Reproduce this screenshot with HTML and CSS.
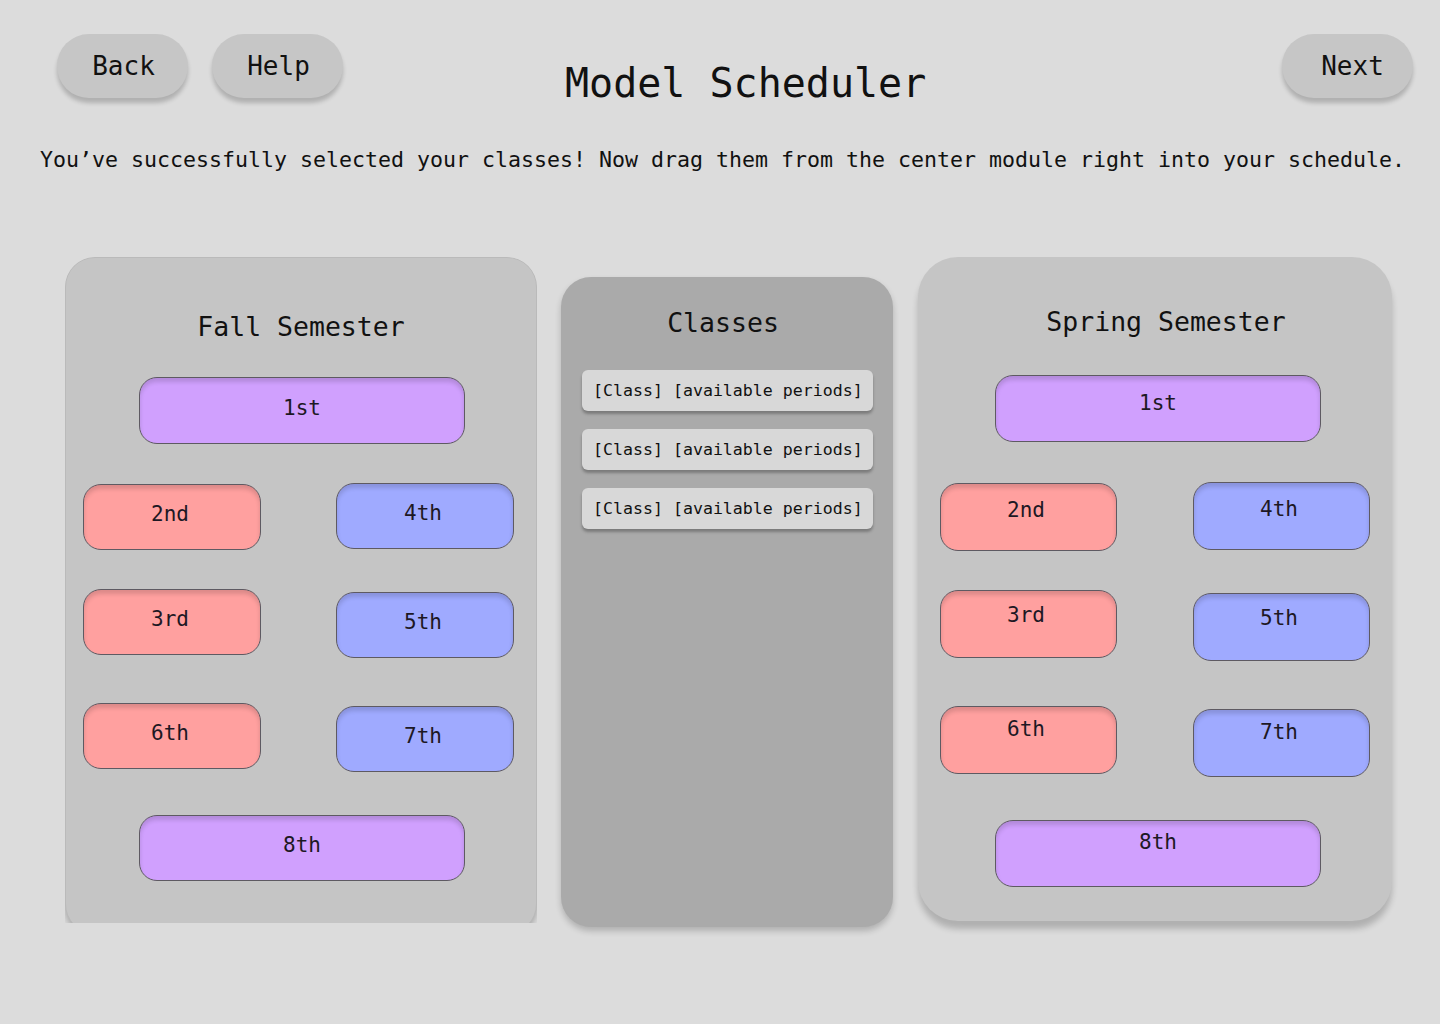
FILE: index.html
```html
<!DOCTYPE html>
<html lang="en">
<head>
<meta charset="utf-8">
<title>Model Scheduler</title>
<link rel="stylesheet" href="styles.css">
</head>
<body>
<header class="top">
  <div class="nav-left">
    <button class="pill">Back</button>
    <button class="pill">Help</button>
  </div>
  <h1 class="title">Model Scheduler</h1>
  <button class="pill next">Next</button>
</header>
<p class="intro">You’ve successfully selected your classes! Now drag them from the center module right into your schedule.</p>

<main class="board">
  <div class="fall-clip">
    <section class="panel fall">
      <h2 class="panel-title">Fall Semester</h2>
      <div class="slot wide purple">1st</div>
      <div class="row row-a">
        <div class="slot red d1">2nd</div>
        <div class="slot blue">4th</div>
      </div>
      <div class="row row-b">
        <div class="slot red">3rd</div>
        <div class="slot blue d3">5th</div>
      </div>
      <div class="row row-c">
        <div class="slot red">6th</div>
        <div class="slot blue d3">7th</div>
      </div>
      <div class="slot wide purple last">8th</div>
    </section>
  </div>

  <section class="panel classes">
    <h2 class="panel-title">Classes</h2>
    <ul class="class-list">
      <li class="class-item">[Class] [available periods]</li>
      <li class="class-item">[Class] [available periods]</li>
      <li class="class-item">[Class] [available periods]</li>
    </ul>
  </section>

  <section class="panel spring">
    <h2 class="panel-title">Spring Semester</h2>
    <div class="slot wide purple p15">1st</div>
    <div class="row row-a">
      <div class="slot red d1 p14">2nd</div>
      <div class="slot blue p14">4th</div>
    </div>
    <div class="row row-b">
      <div class="slot red p12">3rd</div>
      <div class="slot blue d3 p12">5th</div>
    </div>
    <div class="row row-c">
      <div class="slot red p10">6th</div>
      <div class="slot blue d3 p10">7th</div>
    </div>
    <div class="slot wide purple last p9">8th</div>
  </section>
</main>
</body>
</html>
```

FILE: styles.css
```css
* { box-sizing: border-box; }

html, body {
  margin: 0;
  padding: 0;
}

body {
  background: #dcdcdc;
  font-family: "DejaVu Sans Mono", "Liberation Mono", monospace;
  color: #111;
  width: 1440px;
  min-height: 1024px;
}

/* ---------- header ---------- */
.top {
  display: flex;
  align-items: flex-start;
  padding: 34px 27px 0 57px;
}

.nav-left {
  display: flex;
  gap: 24px;
}

.pill {
  width: 131px;
  height: 64px;
  border: none;
  border-radius: 32px;
  background: #c6c6c6;
  font-family: inherit;
  font-size: 26px;
  color: #111;
  padding: 0 0 0 2px;
  box-shadow: 0 5px 4px rgba(0, 0, 0, 0.2);
  cursor: pointer;
}

.title {
  margin: 25px 0 0 222px;
  font-size: 40px;
  line-height: 48px;
  font-weight: normal;
}

.next {
  margin-left: auto;
  padding-left: 10px;
}

.intro {
  margin: 40px 0 0;
  padding-left: 5px;
  text-align: center;
  font-size: 21.6px;
  line-height: 26px;
  white-space: nowrap;
}

/* ---------- board ---------- */
.board {
  display: flex;
  align-items: flex-start;
  padding: 84px 0 0 65px;
  gap: 24px;
}

.panel {
  background: #c5c5c5;
}

.panel-title {
  margin: 0;
  text-align: center;
  font-size: 26.5px;
  line-height: 32px;
  font-weight: normal;
}

.fall-clip {
  width: 472px;
  height: 666px;
  overflow: hidden;
  border-radius: 30px 30px 0 0;
}

.fall {
  width: 472px;
  height: 677px;
  border: 1px solid #bababa;
  border-radius: 30px;
  padding-top: 53px;
  box-shadow: 0 3px 6px rgba(0, 0, 0, 0.25);
}

.fall .panel-title { margin-bottom: 34px; }

.classes {
  width: 332px;
  height: 650px;
  margin-top: 20px;
  background: #aaaaaa;
  border-radius: 30px;
  padding-top: 30px;
  box-shadow: 0 4px 6px rgba(0, 0, 0, 0.2);
}

.classes .panel-title { padding-right: 8px; }

.class-list {
  list-style: none;
  margin: 31px 0 0;
  padding: 0 0 0 21px;
  display: flex;
  flex-direction: column;
  gap: 18px;
}

.class-item {
  width: 291px;
  height: 41px;
  background: #d8d8d8;
  border-radius: 6px;
  padding-left: 11px;
  font-size: 16.6px;
  line-height: 41px;
  white-space: nowrap;
  box-shadow: 0 3px 3px rgba(0, 0, 0, 0.28);
}

.spring {
  width: 474px;
  height: 664px;
  margin-left: 1px;
  border-radius: 40px;
  padding-top: 49px;
  box-shadow: 0 8px 6px rgba(0, 0, 0, 0.2);
}

.spring .panel-title {
  margin-bottom: 37px;
  padding-left: 22px;
}

/* ---------- slots ---------- */
.slot {
  height: 67px;
  border: 1px solid #5e5a62;
  border-radius: 18px;
  font-size: 21px;
  line-height: 24px;
  color: #1d1824;
  text-align: center;
  display: flex;
  justify-content: center;
  align-items: center;
  padding-bottom: 6px;
  box-shadow: inset 0 4px 4px rgba(0, 0, 0, 0.14);
}

.purple { background: #d0a0fe; }
.red    { background: #ffa09f; }
.blue   { background: #9faaff; }

.wide { width: 326px; }

.row {
  display: flex;
  align-items: flex-start;
  justify-content: space-between;
}

.row .slot { width: 178px; height: 66px; }

.d1 { margin-top: 1px; }
.d3 { margin-top: 3px; }

/* fall geometry */
.fall .wide { margin-left: 73px; }
.fall .row { padding: 0 22px 0 17px; }
.fall .row .slot { padding-right: 4px; }
.fall .row-a { margin-top: 39px; height: 67px; }
.fall .row-b { margin-top: 39px; height: 69px; }
.fall .row-c { margin-top: 45px; height: 69px; }
.fall .last { margin-top: 43px; height: 66px; }

/* spring geometry */
.spring .slot {
  align-items: flex-start;
  padding-bottom: 0;
}
.spring .wide { margin-left: 77px; }
.spring .row { padding: 0 22px 0 22px; }
.spring .row .slot { width: 177px; height: 68px; padding-right: 5px; }
.spring .row-a { margin-top: 40px; height: 69px; }
.spring .row-b { margin-top: 39px; height: 70px; }
.spring .row-c { margin-top: 46px; height: 70px; }
.spring .last { margin-top: 44px; height: 67px; }

.p15 { padding-top: 15px; }
.p14 { padding-top: 14px; }
.p12 { padding-top: 12px; }
.p10 { padding-top: 10px; }
.p9  { padding-top: 9px; }
```
